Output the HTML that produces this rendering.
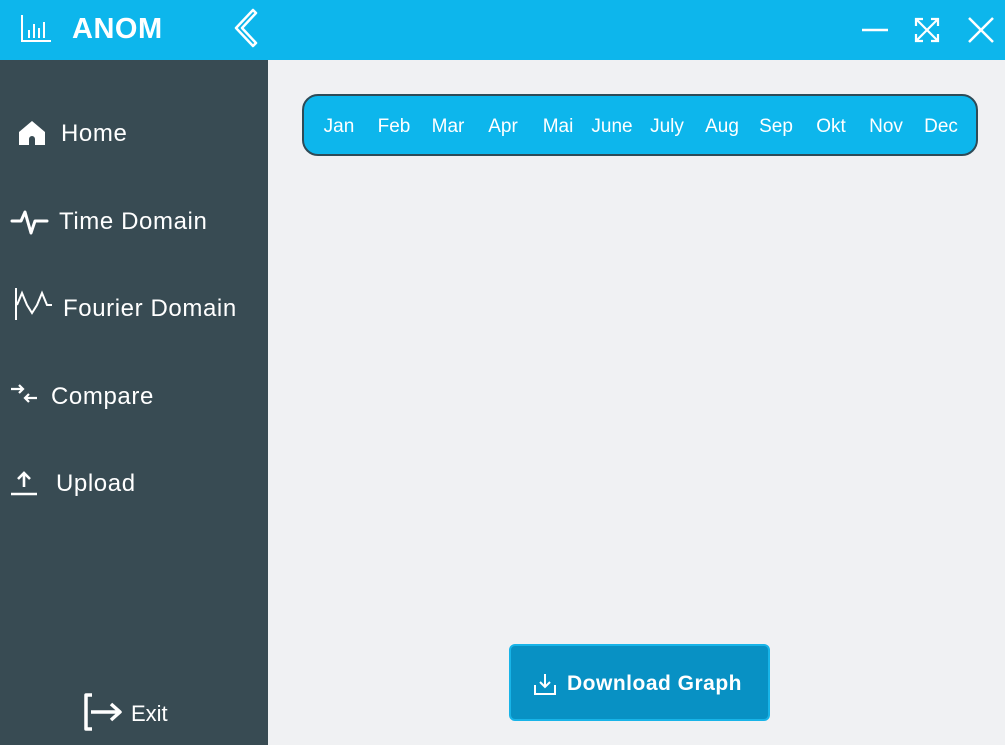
<!DOCTYPE html>
<html><head><meta charset="utf-8"><style>
*{margin:0;padding:0;box-sizing:border-box}
body{width:1005px;height:745px;overflow:hidden;background:#f0f1f3;font-family:"Liberation Sans",sans-serif;position:relative}
.top{position:absolute;left:0;top:0;width:1005px;height:60px;background:#0db6ec}
.side{position:absolute;left:0;top:60px;width:268px;height:685px;background:#384b53}
.t{position:absolute;color:#fff;white-space:nowrap}
.nav{font-size:24px;line-height:28px;letter-spacing:0.6px}
svg{position:absolute}
.bar{position:absolute;left:302px;top:94px;width:676px;height:62px;background:#0db6ec;border:2px solid #2e4b57;border-radius:16px}
.m{position:absolute;top:20px;color:#fff;font-size:19px;transform:translateX(-50%)}
.btn{position:absolute;left:509px;top:644px;width:261px;height:77px;background:#0891c4;border:2px solid #18b4e8;border-radius:6px}
</style></head><body>
<div class="top"></div>
<svg style="left:20px;top:14px" width="32" height="30" viewBox="0 0 32 30" fill="none" stroke="#fff" stroke-width="2"><path d="M2 1V27H31"/><path d="M9 24V16M14 24V10M19 24V14M24 24V8"/></svg>
<div class="t" style="left:72px;top:13px;font-size:29px;font-weight:bold;letter-spacing:0.5px">ANOM</div>
<svg style="left:232px;top:8px" width="26" height="40" viewBox="0 0 26 40" fill="none" stroke="#fff" stroke-width="2.5" stroke-linejoin="round"><path d="M21 2L4 20L21 38L24 35L10 20L24 5Z"/></svg>
<svg style="left:860px;top:18px" width="30" height="24" stroke="#fff" stroke-width="2.5"><path d="M2 12H28"/></svg>
<svg style="left:913px;top:16px" width="28" height="28" viewBox="0 0 28 28" fill="none" stroke="#fff" stroke-width="2.2"><path d="M3 3L25 25M25 3L3 25M3 10V3H10M18 3H25V10M25 18V25H18M10 25H3V18"/></svg>
<svg style="left:966px;top:15px" width="30" height="30" stroke="#fff" stroke-width="2.5"><path d="M3 3L27 27M27 3L3 27"/></svg>

<div class="side"></div>
<svg style="left:18px;top:120px" width="28" height="26" viewBox="0 0 28 26"><path d="M14 1L1 12V25H11V19a3 3 0 0 1 6 0V25H27V12Z" fill="#fff"/></svg>
<div class="t nav" style="left:61px;top:120px">Home</div>
<svg style="left:10px;top:204px" width="40" height="32" viewBox="0 0 40 32" fill="none" stroke="#fff" stroke-width="3" stroke-linejoin="round" stroke-linecap="round"><path d="M2 17H11L15 8L21 29L25 17H37"/></svg>
<div class="t nav" style="left:59px;top:208px">Time Domain</div>
<svg style="left:14px;top:287px" width="40" height="34" viewBox="0 0 40 34" fill="none" stroke="#fff" stroke-width="2"><path d="M2 1V33"/><path d="M3 18L8 6L13 18L18 26L23 18L28 6L33 18H38"/></svg>
<div class="t nav" style="left:63px;top:295px">Fourier Domain</div>
<svg style="left:10px;top:383px" width="30" height="26" viewBox="0 0 30 26" fill="none" stroke="#fff" stroke-width="2.2"><path d="M1 6H13M9 2L13 6L9 10M27 15H15M19 11L15 15L19 19"/></svg>
<div class="t nav" style="left:51px;top:383px">Compare</div>
<svg style="left:10px;top:470px" width="28" height="26" viewBox="0 0 28 26" fill="none" stroke="#fff" stroke-width="2.6"><path d="M14 17V3M8 9L14 3L20 9M1 24H27"/></svg>
<div class="t nav" style="left:56px;top:470px">Upload</div>
<svg style="left:82px;top:692px" width="44" height="40" viewBox="0 0 44 40" fill="none" stroke="#fff" stroke-width="3.5" stroke-linejoin="round"><path d="M10 3H4V37H10"/><path d="M9 20H38M29 12L38 20L29 28"/></svg>
<div class="t" style="left:131px;top:701px;font-size:22px">Exit</div>

<div class="bar">
<span class="m" style="left:35px">Jan</span><span class="m" style="left:90px">Feb</span><span class="m" style="left:144px">Mar</span><span class="m" style="left:199px">Apr</span><span class="m" style="left:254px">Mai</span><span class="m" style="left:308px">June</span><span class="m" style="left:363px">July</span><span class="m" style="left:418px">Aug</span><span class="m" style="left:472px">Sep</span><span class="m" style="left:527px">Okt</span><span class="m" style="left:582px">Nov</span><span class="m" style="left:637px">Dec</span>
</div>

<div class="btn"></div>
<svg style="left:533px;top:672px" width="24" height="24" viewBox="0 0 24 24" fill="none" stroke="#fff" stroke-width="2"><path d="M12 2V15M7 10L12 15L17 10M2 13V22H22V13"/></svg>
<div class="t" style="left:567px;top:672px;font-size:21px;font-weight:bold;letter-spacing:0.5px">Download Graph</div>
</body></html>
